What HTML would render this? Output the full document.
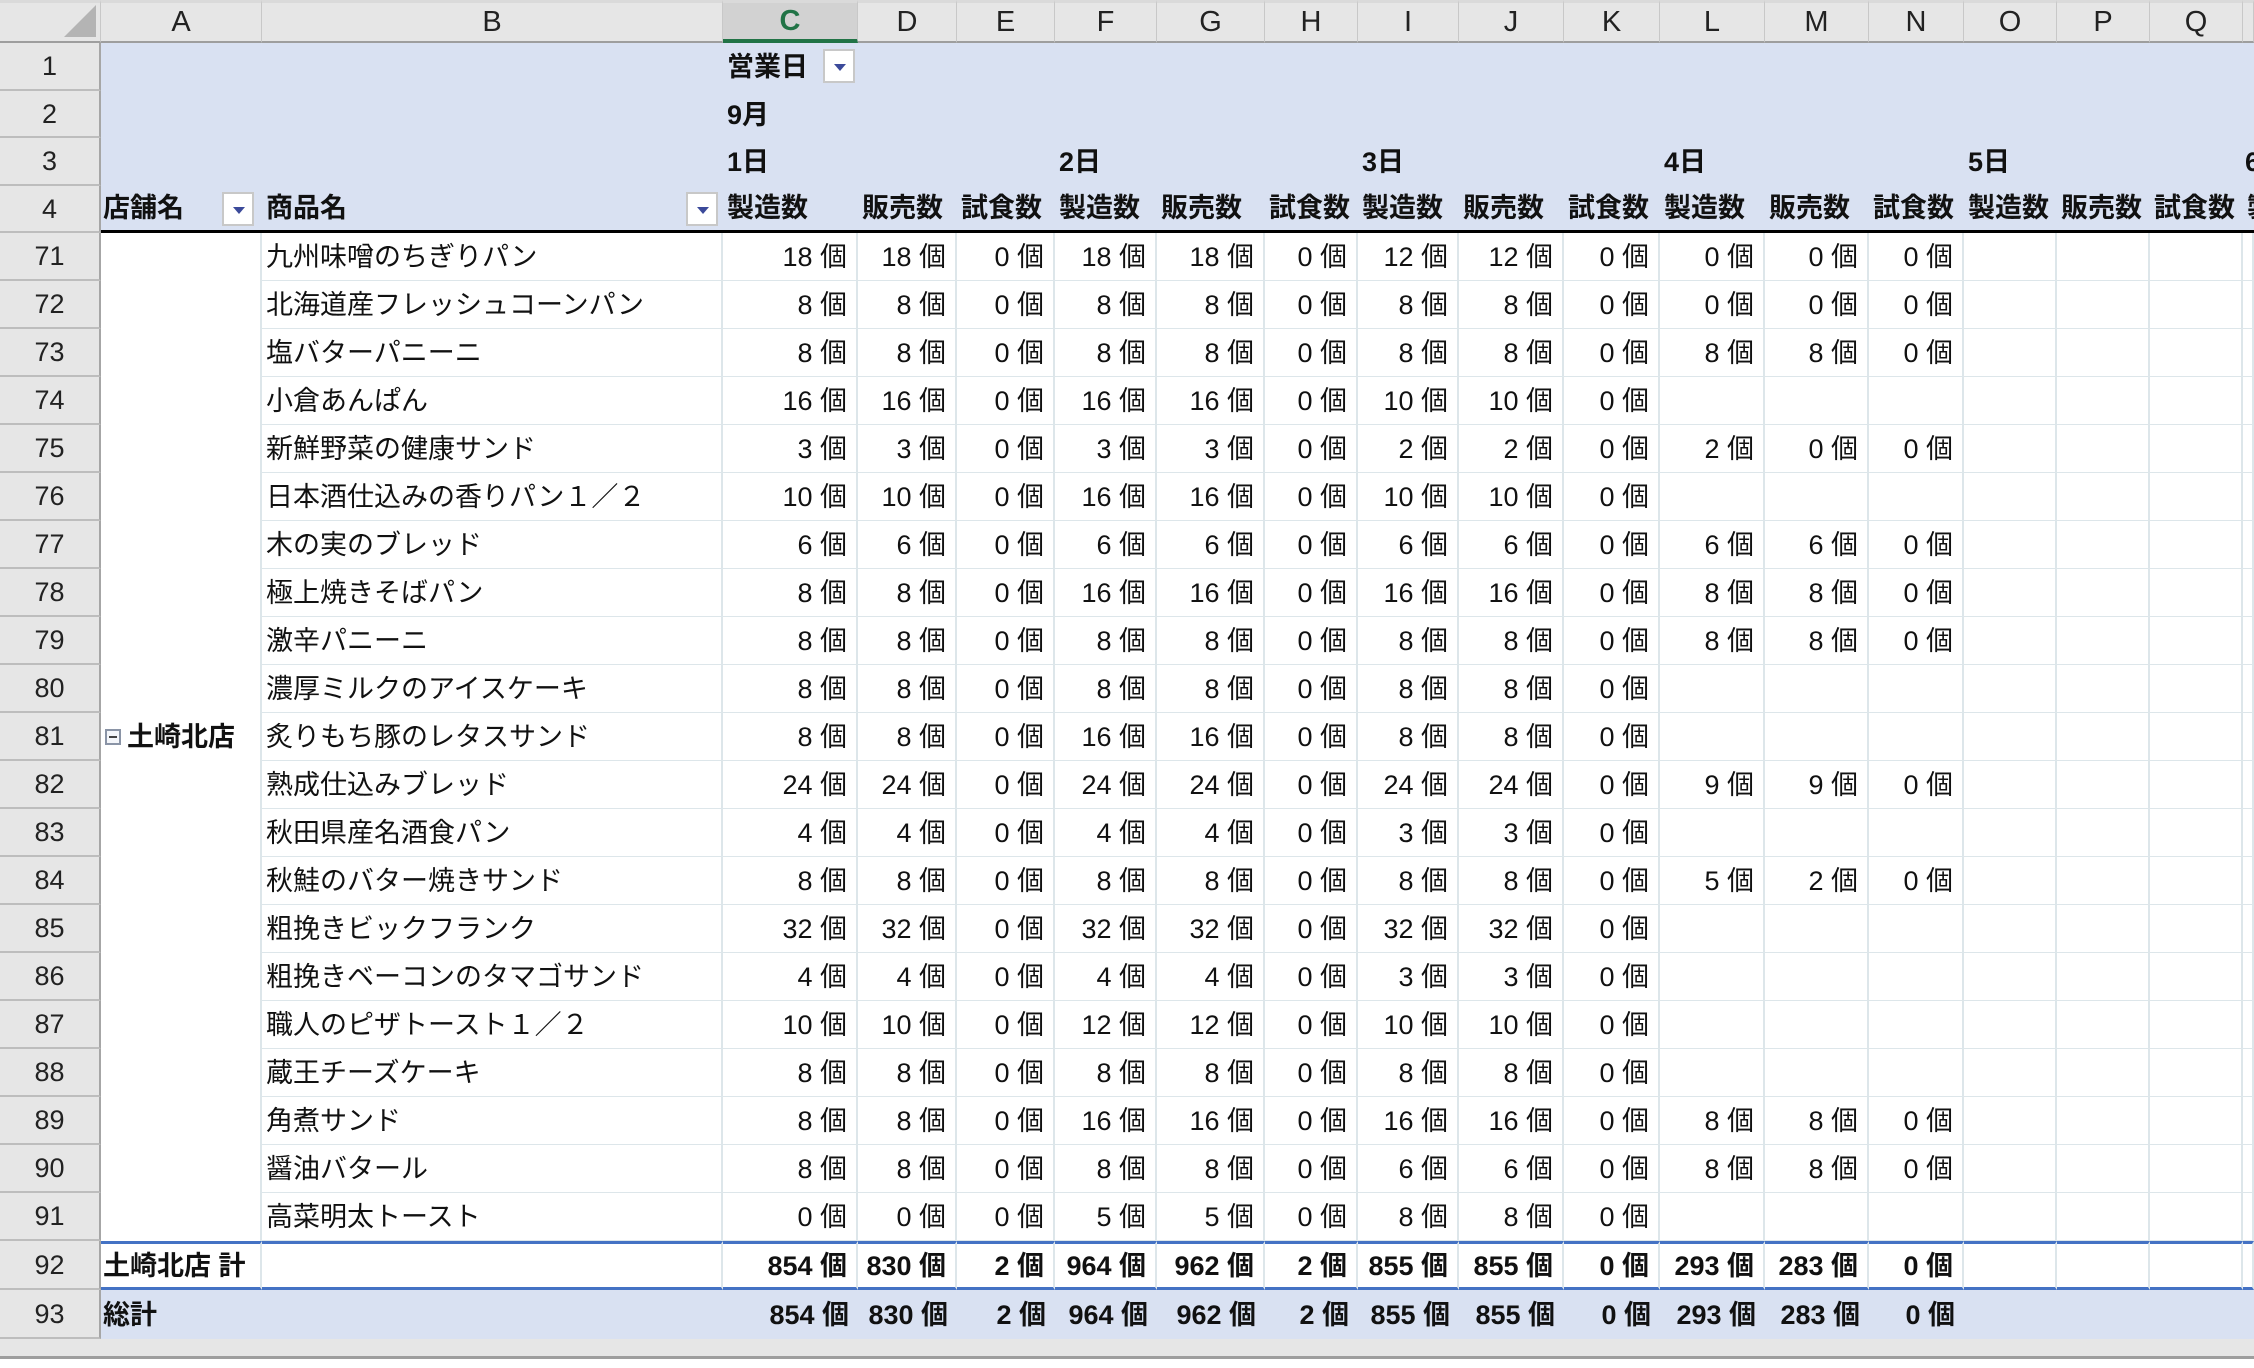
<!DOCTYPE html>
<html><head><meta charset="utf-8">
<style>
html,body{margin:0;padding:0;}
body{width:2254px;height:1368px;overflow:hidden;background:#e6e6e6;position:relative;font-family:"Liberation Sans","Noto Sans CJK JP",sans-serif;}
table{border-collapse:separate;border-spacing:0;table-layout:fixed;position:absolute;left:0;top:0;width:2254px;}
td{padding:0;overflow:hidden;white-space:nowrap;font-size:27px;color:#111;box-sizing:border-box;line-height:30px;}
tr.ch td{height:43px;background:#e6e6e6;border-right:1px solid #c8c8c8;border-bottom:2px solid #9e9e9e;text-align:center;font-size:29px;color:#222;border-top:3px solid #dadada;}
tr.ch td.sel{background:#d2d2d2;color:#217346;border-bottom:4px solid #217346;font-weight:bold;}
td.rn{background:#e6e6e6;text-align:center;border-right:2px solid #a6a6a6;border-bottom:2px solid #bdbdbd;color:#222;}
tr.h td{background:#d9e1f2;font-weight:bold;}
tr.h td.rn{background:#e6e6e6;font-weight:normal;}
tr.h4 td{border-bottom:3px solid #000;}
tr.h4 td.rn{border-bottom:2px solid #bdbdbd;}
tr.d td{height:48px;background:#fff;border-right:2px solid #dde6ea;border-bottom:1px solid #dde6ea;}
tr.d td.rn{background:#e6e6e6;border-right:2px solid #a6a6a6;border-bottom:2px solid #bdbdbd;}
tr.d td.a{border-bottom:none;border-right:2px solid #dde6ea;}
td.n{text-align:right;padding-right:9px;}
td.b{padding-left:4px;}
tr.t td{height:49px;background:#fff;font-weight:bold;border-top:3px solid #4472c4;border-bottom:3px solid #4472c4;border-right:2px solid #dde6ea;}
tr.t td.rn{background:#e6e6e6;font-weight:normal;border-top:none;border-right:2px solid #a6a6a6;border-bottom:2px solid #bdbdbd;}
tr.g td{height:49px;background:#d9e1f2;font-weight:bold;}
tr.g td.rn{background:#e6e6e6;font-weight:normal;border-right:2px solid #a6a6a6;}
.btn{display:inline-block;position:absolute;width:32px;height:34px;background:#fff;border:2px solid #c8c8c8;box-sizing:border-box;}
.btn:after{content:"";position:absolute;left:9px;top:13px;border-left:6px solid transparent;border-right:6px solid transparent;border-top:7px solid #3b4a9a;}
.rel{position:relative;}
.minus{display:inline-block;width:16px;height:16px;border:2px solid #8a94a6;box-sizing:border-box;position:relative;vertical-align:middle;margin:0 6px 4px 4px;background:#f4f6fa;}
.minus:after{content:"";position:absolute;left:2px;right:2px;top:5px;height:2px;background:#444;}
</style></head><body>
<table>
<colgroup><col style="width:101px"><col style="width:161px"><col style="width:461px"><col style="width:135px"><col style="width:99px"><col style="width:98px"><col style="width:102px"><col style="width:108px"><col style="width:93px"><col style="width:101px"><col style="width:105px"><col style="width:96px"><col style="width:105px"><col style="width:104px"><col style="width:95px"><col style="width:93px"><col style="width:93px"><col style="width:93px"><col style="width:11px"></colgroup>
<tr class="ch"><td style="position:relative"><span style="position:absolute;right:4px;bottom:4px;width:0;height:0;border-left:32px solid transparent;border-bottom:32px solid #b4b4b4"></span></td><td>A</td><td>B</td><td class="sel">C</td><td>D</td><td>E</td><td>F</td><td>G</td><td>H</td><td>I</td><td>J</td><td>K</td><td>L</td><td>M</td><td>N</td><td>O</td><td>P</td><td>Q</td><td></td></tr>
<tr class="h" style="height:48px"><td class="rn" style="height:48px">1</td><td></td><td></td><td class="b rel">営業日<span class="btn" style="left:100px;top:6px"></span></td><td></td><td></td><td></td><td></td><td></td><td></td><td></td><td></td><td></td><td></td><td></td><td></td><td></td><td></td><td></td></tr>
<tr class="h" style="height:47px"><td class="rn" style="height:47px">2</td><td></td><td></td><td class="b">9月</td><td></td><td></td><td></td><td></td><td></td><td></td><td></td><td></td><td></td><td></td><td></td><td></td><td></td><td></td><td></td></tr>
<tr class="h" style="height:48px"><td class="rn" style="height:48px">3</td><td></td><td></td><td class="b">1日</td><td></td><td></td><td class="b">2日</td><td></td><td></td><td class="b">3日</td><td></td><td></td><td class="b">4日</td><td></td><td></td><td class="b">5日</td><td></td><td></td><td class="b" style="padding-left:2px">6</td></tr>
<tr class="h h4" style="height:47px"><td class="rn" style="height:47px">4</td><td class="rel" style="padding-left:2px">店舗名<span class="btn" style="left:121px;top:6px"></span></td><td class="b rel">商品名<span class="btn" style="left:424px;top:6px"></span></td><td class="b">製造数</td><td class="b">販売数</td><td class="b">試食数</td><td class="b">製造数</td><td class="b">販売数</td><td class="b">試食数</td><td class="b">製造数</td><td class="b">販売数</td><td class="b">試食数</td><td class="b">製造数</td><td class="b">販売数</td><td class="b">試食数</td><td class="b">製造数</td><td class="b">販売数</td><td class="b">試食数</td><td class="b">製</td></tr>
<tr class="d"><td class="rn">71</td><td class="a"></td><td class="b">九州味噌のちぎりパン</td><td class="n">18 個</td><td class="n">18 個</td><td class="n">0 個</td><td class="n">18 個</td><td class="n">18 個</td><td class="n">0 個</td><td class="n">12 個</td><td class="n">12 個</td><td class="n">0 個</td><td class="n">0 個</td><td class="n">0 個</td><td class="n">0 個</td><td></td><td></td><td></td><td></td></tr>
<tr class="d"><td class="rn">72</td><td class="a"></td><td class="b">北海道産フレッシュコーンパン</td><td class="n">8 個</td><td class="n">8 個</td><td class="n">0 個</td><td class="n">8 個</td><td class="n">8 個</td><td class="n">0 個</td><td class="n">8 個</td><td class="n">8 個</td><td class="n">0 個</td><td class="n">0 個</td><td class="n">0 個</td><td class="n">0 個</td><td></td><td></td><td></td><td></td></tr>
<tr class="d"><td class="rn">73</td><td class="a"></td><td class="b">塩バターパニーニ</td><td class="n">8 個</td><td class="n">8 個</td><td class="n">0 個</td><td class="n">8 個</td><td class="n">8 個</td><td class="n">0 個</td><td class="n">8 個</td><td class="n">8 個</td><td class="n">0 個</td><td class="n">8 個</td><td class="n">8 個</td><td class="n">0 個</td><td></td><td></td><td></td><td></td></tr>
<tr class="d"><td class="rn">74</td><td class="a"></td><td class="b">小倉あんぱん</td><td class="n">16 個</td><td class="n">16 個</td><td class="n">0 個</td><td class="n">16 個</td><td class="n">16 個</td><td class="n">0 個</td><td class="n">10 個</td><td class="n">10 個</td><td class="n">0 個</td><td></td><td></td><td></td><td></td><td></td><td></td><td></td></tr>
<tr class="d"><td class="rn">75</td><td class="a"></td><td class="b">新鮮野菜の健康サンド</td><td class="n">3 個</td><td class="n">3 個</td><td class="n">0 個</td><td class="n">3 個</td><td class="n">3 個</td><td class="n">0 個</td><td class="n">2 個</td><td class="n">2 個</td><td class="n">0 個</td><td class="n">2 個</td><td class="n">0 個</td><td class="n">0 個</td><td></td><td></td><td></td><td></td></tr>
<tr class="d"><td class="rn">76</td><td class="a"></td><td class="b">日本酒仕込みの香りパン１／２</td><td class="n">10 個</td><td class="n">10 個</td><td class="n">0 個</td><td class="n">16 個</td><td class="n">16 個</td><td class="n">0 個</td><td class="n">10 個</td><td class="n">10 個</td><td class="n">0 個</td><td></td><td></td><td></td><td></td><td></td><td></td><td></td></tr>
<tr class="d"><td class="rn">77</td><td class="a"></td><td class="b">木の実のブレッド</td><td class="n">6 個</td><td class="n">6 個</td><td class="n">0 個</td><td class="n">6 個</td><td class="n">6 個</td><td class="n">0 個</td><td class="n">6 個</td><td class="n">6 個</td><td class="n">0 個</td><td class="n">6 個</td><td class="n">6 個</td><td class="n">0 個</td><td></td><td></td><td></td><td></td></tr>
<tr class="d"><td class="rn">78</td><td class="a"></td><td class="b">極上焼きそばパン</td><td class="n">8 個</td><td class="n">8 個</td><td class="n">0 個</td><td class="n">16 個</td><td class="n">16 個</td><td class="n">0 個</td><td class="n">16 個</td><td class="n">16 個</td><td class="n">0 個</td><td class="n">8 個</td><td class="n">8 個</td><td class="n">0 個</td><td></td><td></td><td></td><td></td></tr>
<tr class="d"><td class="rn">79</td><td class="a"></td><td class="b">激辛パニーニ</td><td class="n">8 個</td><td class="n">8 個</td><td class="n">0 個</td><td class="n">8 個</td><td class="n">8 個</td><td class="n">0 個</td><td class="n">8 個</td><td class="n">8 個</td><td class="n">0 個</td><td class="n">8 個</td><td class="n">8 個</td><td class="n">0 個</td><td></td><td></td><td></td><td></td></tr>
<tr class="d"><td class="rn">80</td><td class="a"></td><td class="b">濃厚ミルクのアイスケーキ</td><td class="n">8 個</td><td class="n">8 個</td><td class="n">0 個</td><td class="n">8 個</td><td class="n">8 個</td><td class="n">0 個</td><td class="n">8 個</td><td class="n">8 個</td><td class="n">0 個</td><td></td><td></td><td></td><td></td><td></td><td></td><td></td></tr>
<tr class="d"><td class="rn">81</td><td class="a" style="font-weight:bold"><span class="minus"></span>土崎北店</td><td class="b">炙りもち豚のレタスサンド</td><td class="n">8 個</td><td class="n">8 個</td><td class="n">0 個</td><td class="n">16 個</td><td class="n">16 個</td><td class="n">0 個</td><td class="n">8 個</td><td class="n">8 個</td><td class="n">0 個</td><td></td><td></td><td></td><td></td><td></td><td></td><td></td></tr>
<tr class="d"><td class="rn">82</td><td class="a"></td><td class="b">熟成仕込みブレッド</td><td class="n">24 個</td><td class="n">24 個</td><td class="n">0 個</td><td class="n">24 個</td><td class="n">24 個</td><td class="n">0 個</td><td class="n">24 個</td><td class="n">24 個</td><td class="n">0 個</td><td class="n">9 個</td><td class="n">9 個</td><td class="n">0 個</td><td></td><td></td><td></td><td></td></tr>
<tr class="d"><td class="rn">83</td><td class="a"></td><td class="b">秋田県産名酒食パン</td><td class="n">4 個</td><td class="n">4 個</td><td class="n">0 個</td><td class="n">4 個</td><td class="n">4 個</td><td class="n">0 個</td><td class="n">3 個</td><td class="n">3 個</td><td class="n">0 個</td><td></td><td></td><td></td><td></td><td></td><td></td><td></td></tr>
<tr class="d"><td class="rn">84</td><td class="a"></td><td class="b">秋鮭のバター焼きサンド</td><td class="n">8 個</td><td class="n">8 個</td><td class="n">0 個</td><td class="n">8 個</td><td class="n">8 個</td><td class="n">0 個</td><td class="n">8 個</td><td class="n">8 個</td><td class="n">0 個</td><td class="n">5 個</td><td class="n">2 個</td><td class="n">0 個</td><td></td><td></td><td></td><td></td></tr>
<tr class="d"><td class="rn">85</td><td class="a"></td><td class="b">粗挽きビックフランク</td><td class="n">32 個</td><td class="n">32 個</td><td class="n">0 個</td><td class="n">32 個</td><td class="n">32 個</td><td class="n">0 個</td><td class="n">32 個</td><td class="n">32 個</td><td class="n">0 個</td><td></td><td></td><td></td><td></td><td></td><td></td><td></td></tr>
<tr class="d"><td class="rn">86</td><td class="a"></td><td class="b">粗挽きベーコンのタマゴサンド</td><td class="n">4 個</td><td class="n">4 個</td><td class="n">0 個</td><td class="n">4 個</td><td class="n">4 個</td><td class="n">0 個</td><td class="n">3 個</td><td class="n">3 個</td><td class="n">0 個</td><td></td><td></td><td></td><td></td><td></td><td></td><td></td></tr>
<tr class="d"><td class="rn">87</td><td class="a"></td><td class="b">職人のピザトースト１／２</td><td class="n">10 個</td><td class="n">10 個</td><td class="n">0 個</td><td class="n">12 個</td><td class="n">12 個</td><td class="n">0 個</td><td class="n">10 個</td><td class="n">10 個</td><td class="n">0 個</td><td></td><td></td><td></td><td></td><td></td><td></td><td></td></tr>
<tr class="d"><td class="rn">88</td><td class="a"></td><td class="b">蔵王チーズケーキ</td><td class="n">8 個</td><td class="n">8 個</td><td class="n">0 個</td><td class="n">8 個</td><td class="n">8 個</td><td class="n">0 個</td><td class="n">8 個</td><td class="n">8 個</td><td class="n">0 個</td><td></td><td></td><td></td><td></td><td></td><td></td><td></td></tr>
<tr class="d"><td class="rn">89</td><td class="a"></td><td class="b">角煮サンド</td><td class="n">8 個</td><td class="n">8 個</td><td class="n">0 個</td><td class="n">16 個</td><td class="n">16 個</td><td class="n">0 個</td><td class="n">16 個</td><td class="n">16 個</td><td class="n">0 個</td><td class="n">8 個</td><td class="n">8 個</td><td class="n">0 個</td><td></td><td></td><td></td><td></td></tr>
<tr class="d"><td class="rn">90</td><td class="a"></td><td class="b">醤油バタール</td><td class="n">8 個</td><td class="n">8 個</td><td class="n">0 個</td><td class="n">8 個</td><td class="n">8 個</td><td class="n">0 個</td><td class="n">6 個</td><td class="n">6 個</td><td class="n">0 個</td><td class="n">8 個</td><td class="n">8 個</td><td class="n">0 個</td><td></td><td></td><td></td><td></td></tr>
<tr class="d"><td class="rn">91</td><td class="a"></td><td class="b">高菜明太トースト</td><td class="n">0 個</td><td class="n">0 個</td><td class="n">0 個</td><td class="n">5 個</td><td class="n">5 個</td><td class="n">0 個</td><td class="n">8 個</td><td class="n">8 個</td><td class="n">0 個</td><td></td><td></td><td></td><td></td><td></td><td></td><td></td></tr>
<tr class="t"><td class="rn">92</td><td style="padding-left:2px">土崎北店 計</td><td></td><td class="n">854 個</td><td class="n">830 個</td><td class="n">2 個</td><td class="n">964 個</td><td class="n">962 個</td><td class="n">2 個</td><td class="n">855 個</td><td class="n">855 個</td><td class="n">0 個</td><td class="n">293 個</td><td class="n">283 個</td><td class="n">0 個</td><td></td><td></td><td></td><td></td></tr>
<tr class="g"><td class="rn">93</td><td style="padding-left:2px">総計</td><td></td><td class="n">854 個</td><td class="n">830 個</td><td class="n">2 個</td><td class="n">964 個</td><td class="n">962 個</td><td class="n">2 個</td><td class="n">855 個</td><td class="n">855 個</td><td class="n">0 個</td><td class="n">293 個</td><td class="n">283 個</td><td class="n">0 個</td><td></td><td></td><td></td><td></td></tr>
</table>
<div style="position:absolute;left:0;top:1356px;width:2254px;height:3px;background:#9e9e9e"></div>
<div style="position:absolute;left:0;top:1359px;width:2254px;height:9px;background:#fff"></div>
</body></html>
